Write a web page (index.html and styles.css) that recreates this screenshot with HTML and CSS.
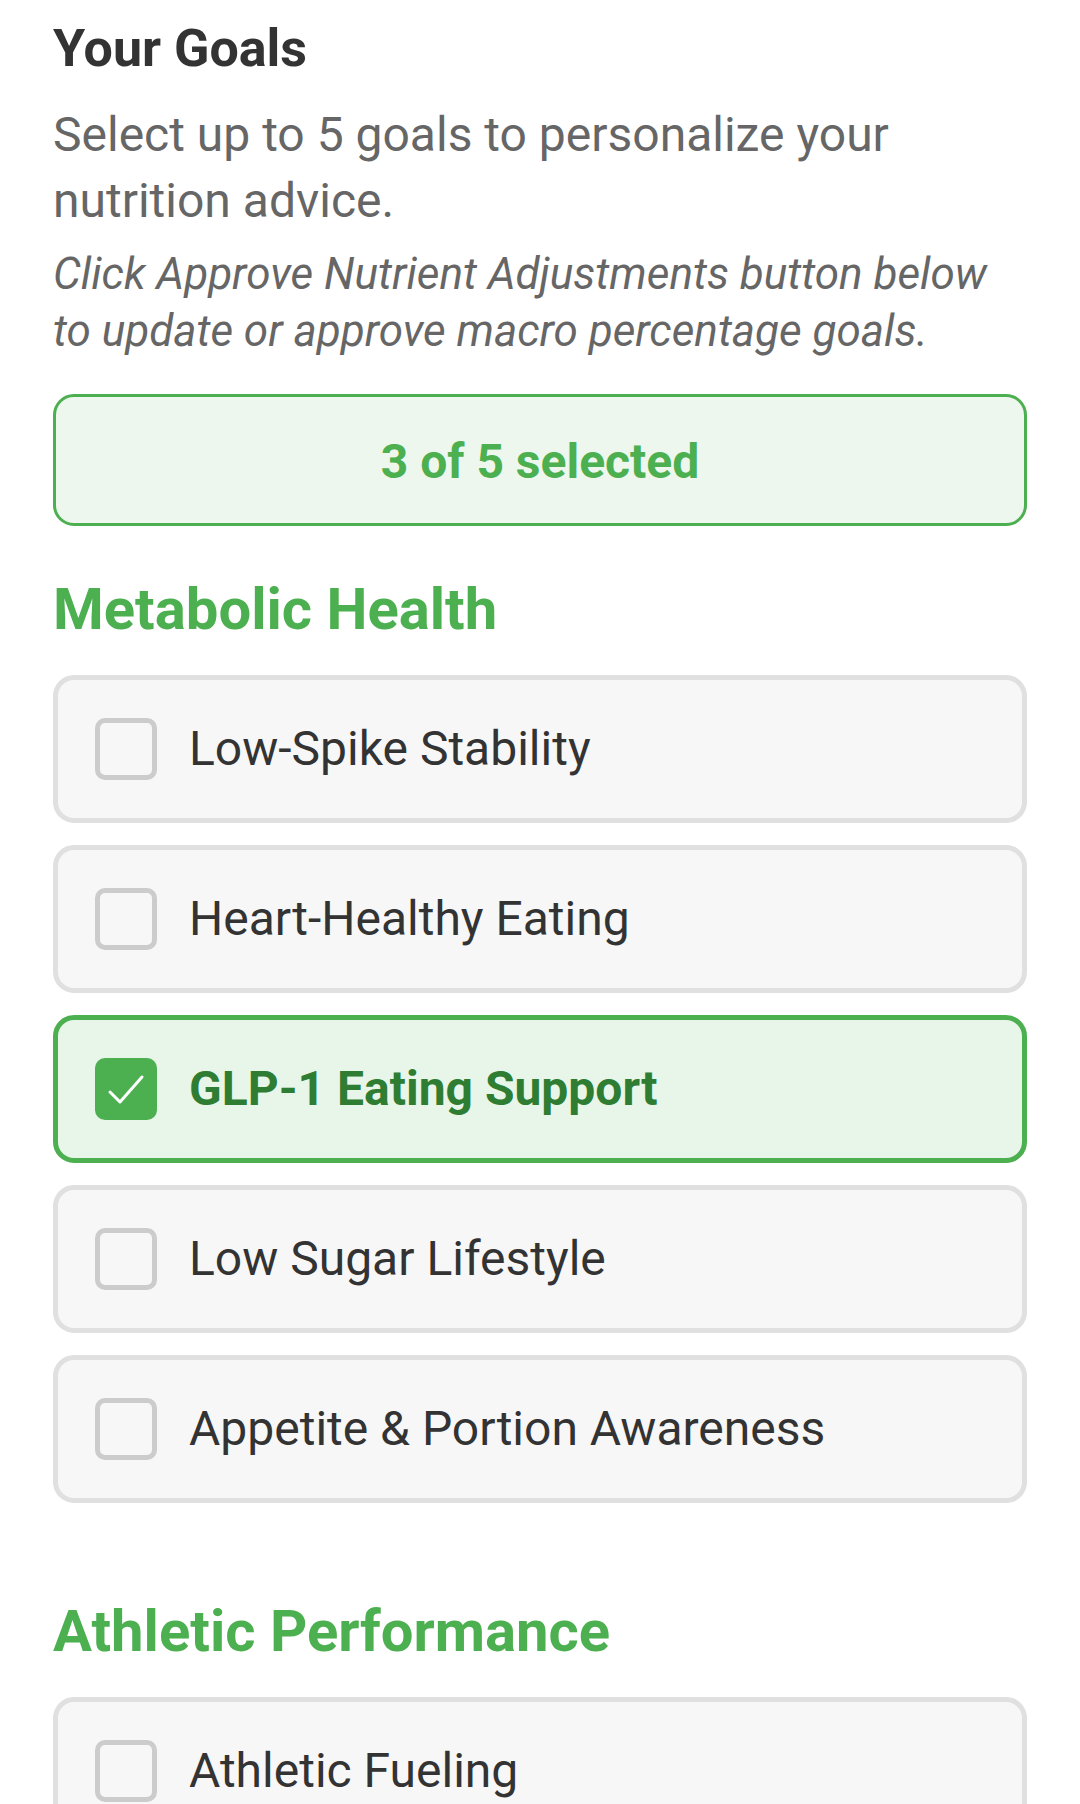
FILE: index.html
```html
<!DOCTYPE html>
<html lang="en">

<head>
    <meta charset="UTF-8">
    <meta name="viewport" content="width=device-width, initial-scale=1.0">
    <title>Your Goals</title>
    <link rel="stylesheet" href="styles.css">
</head>

<body>
    <div class="goals-page">
        <h2 class="goals-title">Your Goals</h2>
        <p class="goals-subtitle">Select up to 5 goals to personalize your nutrition advice.</p>
        <p class="goals-note">Click Approve Nutrient Adjustments button below to update or approve macro percentage goals.</p>

        <div class="goals-counter">3 of 5 selected</div>

        <section class="goal-group">
            <h3 class="goal-group-title">Metabolic Health</h3>
            <div class="goal-list">
                <div class="goal-option">
                    <span class="goal-check"></span>
                    <span class="goal-label">Low-Spike Stability</span>
                </div>
                <div class="goal-option">
                    <span class="goal-check"></span>
                    <span class="goal-label">Heart-Healthy Eating</span>
                </div>
                <div class="goal-option selected">
                    <span class="goal-check">
                        <svg viewBox="0 0 52 52" width="52" height="52">
                            <polyline points="10,29 20,39 42,14" fill="none" stroke="#fff" stroke-width="3" stroke-linecap="round" stroke-linejoin="round" />
                        </svg>
                    </span>
                    <span class="goal-label">GLP-1 Eating Support</span>
                </div>
                <div class="goal-option">
                    <span class="goal-check"></span>
                    <span class="goal-label">Low Sugar Lifestyle</span>
                </div>
                <div class="goal-option">
                    <span class="goal-check"></span>
                    <span class="goal-label">Appetite &amp; Portion Awareness</span>
                </div>
            </div>
        </section>

        <section class="goal-group">
            <h3 class="goal-group-title">Athletic Performance</h3>
            <div class="goal-list">
                <div class="goal-option">
                    <span class="goal-check"></span>
                    <span class="goal-label">Athletic Fueling</span>
                </div>
                <div class="goal-option">
                    <span class="goal-check"></span>
                    <span class="goal-label">Muscle Building</span>
                </div>
            </div>
        </section>
    </div>
</body>

</html>
```

FILE: styles.css
```css
body {
    margin: 0;
    padding: 0;
    background-color: #fff;
    font-family: Roboto, "Liberation Sans", Arial, sans-serif;
    color: #333;
    overflow: hidden;
}

.goals-page {
    padding: 18px 53px 0;
}

.goals-title {
    margin: 0;
    font-size: 52px;
    line-height: 62px;
    font-weight: 700;
    color: #333;
}

.goals-subtitle {
    margin: 22px 0 0;
    font-size: 48px;
    line-height: 66px;
    color: #666;
}

.goals-note {
    margin: 12px 0 0;
    font-size: 44px;
    line-height: 57px;
    font-style: italic;
    color: #666;
}

.goals-counter {
    margin-top: 34px;
    padding: 37px 20px 33px;
    border: 3px solid #4caf50;
    border-radius: 21px;
    background-color: #eef7ee;
    color: #4caf50;
    font-size: 48px;
    line-height: 56px;
    font-weight: 700;
    text-align: center;
}

.goal-group {
    margin-top: 48px;
}

.goal-group + .goal-group {
    margin-top: 93px;
}

.goal-group-title {
    margin: 0 0 31px;
    font-size: 58px;
    line-height: 70px;
    font-weight: 700;
    color: #4caf50;
}

.goal-list {
    display: flex;
    flex-direction: column;
    gap: 22px;
}

.goal-option {
    display: flex;
    align-items: center;
    gap: 32px;
    padding: 38px 37px;
    border: 5px solid #e0e0e0;
    border-radius: 21px;
    background-color: #f7f7f7;
}

.goal-check {
    box-sizing: border-box;
    flex: none;
    width: 62px;
    height: 62px;
    border: 5px solid #ccc;
    border-radius: 10px;
}

.goal-check svg {
    display: block;
}

.goal-label {
    font-size: 48px;
    line-height: 56px;
    color: #333;
}

.goal-option.selected {
    border-color: #4caf50;
    background-color: #e8f5e9;
}

.goal-option.selected .goal-check {
    border-color: #4caf50;
    background-color: #4caf50;
}

.goal-option.selected .goal-label {
    font-weight: 700;
    color: #2e7d32;
}
```
